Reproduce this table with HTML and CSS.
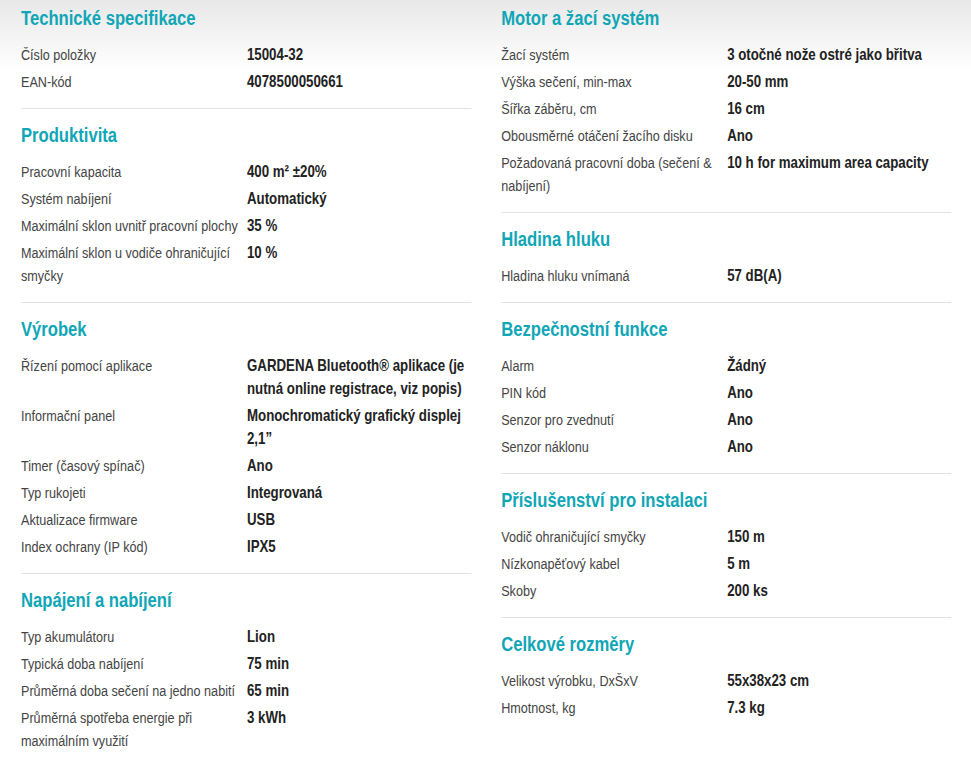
FILE: index.html
```html
<!DOCTYPE html>
<html lang="cs">
<head>
<meta charset="utf-8">
<link rel="stylesheet" href="styles.css">
</head>
<body>
<div class="page">
  <div class="col">
    <section class="sec">
      <h3>Technické specifikace</h3>
      <div class="row"><div class="k">Číslo položky</div><div class="v">15004-32</div></div>
      <div class="row"><div class="k">EAN-kód</div><div class="v">4078500050661</div></div>
    </section>
    <section class="sec">
      <h3>Produktivita</h3>
      <div class="row"><div class="k">Pracovní kapacita</div><div class="v">400 m² ±20%</div></div>
      <div class="row"><div class="k">Systém nabíjení</div><div class="v">Automatický</div></div>
      <div class="row"><div class="k">Maximální sklon uvnitř pracovní plochy</div><div class="v">35 %</div></div>
      <div class="row"><div class="k">Maximální sklon u vodiče ohraničující smyčky</div><div class="v">10 %</div></div>
    </section>
    <section class="sec">
      <h3>Výrobek</h3>
      <div class="row"><div class="k">Řízení pomocí aplikace</div><div class="v">GARDENA Bluetooth® aplikace (je nutná online registrace, viz popis)</div></div>
      <div class="row"><div class="k">Informační panel</div><div class="v">Monochromatický grafický displej 2,1”</div></div>
      <div class="row"><div class="k">Timer (časový spínač)</div><div class="v">Ano</div></div>
      <div class="row"><div class="k">Typ rukojeti</div><div class="v">Integrovaná</div></div>
      <div class="row"><div class="k">Aktualizace firmware</div><div class="v">USB</div></div>
      <div class="row"><div class="k">Index ochrany (IP kód)</div><div class="v">IPX5</div></div>
    </section>
    <section class="sec">
      <h3>Napájení a nabíjení</h3>
      <div class="row"><div class="k">Typ akumulátoru</div><div class="v">Lion</div></div>
      <div class="row"><div class="k">Typická doba nabíjení</div><div class="v">75 min</div></div>
      <div class="row"><div class="k">Průměrná doba sečení na jedno nabití</div><div class="v">65 min</div></div>
      <div class="row"><div class="k">Průměrná spotřeba energie při maximálním využití</div><div class="v">3 kWh</div></div>
    </section>
  </div>
  <div class="col">
    <section class="sec">
      <h3>Motor a žací systém</h3>
      <div class="row"><div class="k">Žací systém</div><div class="v">3 otočné nože ostré jako břitva</div></div>
      <div class="row"><div class="k">Výška sečení, min-max</div><div class="v">20-50 mm</div></div>
      <div class="row"><div class="k">Šířka záběru, cm</div><div class="v">16 cm</div></div>
      <div class="row"><div class="k">Obousměrné otáčení žacího disku</div><div class="v">Ano</div></div>
      <div class="row"><div class="k">Požadovaná pracovní doba (sečení &amp; nabíjení)</div><div class="v">10 h for maximum area capacity</div></div>
    </section>
    <section class="sec">
      <h3>Hladina hluku</h3>
      <div class="row"><div class="k">Hladina hluku vnímaná</div><div class="v">57 dB(A)</div></div>
    </section>
    <section class="sec">
      <h3>Bezpečnostní funkce</h3>
      <div class="row"><div class="k">Alarm</div><div class="v">Žádný</div></div>
      <div class="row"><div class="k">PIN kód</div><div class="v">Ano</div></div>
      <div class="row"><div class="k">Senzor pro zvednutí</div><div class="v">Ano</div></div>
      <div class="row"><div class="k">Senzor náklonu</div><div class="v">Ano</div></div>
    </section>
    <section class="sec">
      <h3>Příslušenství pro instalaci</h3>
      <div class="row"><div class="k">Vodič ohraničující smyčky</div><div class="v">150 m</div></div>
      <div class="row"><div class="k">Nízkonapěťový kabel</div><div class="v">5 m</div></div>
      <div class="row"><div class="k">Skoby</div><div class="v">200 ks</div></div>
    </section>
    <section class="sec">
      <h3>Celkové rozměry</h3>
      <div class="row"><div class="k">Velikost výrobku, DxŠxV</div><div class="v">55x38x23 cm</div></div>
      <div class="row"><div class="k">Hmotnost, kg</div><div class="v">7.3 kg</div></div>
    </section>
  </div>
</div>
</body>
</html>
```

FILE: styles.css
```css
html, body {
  margin: 0;
  padding: 0;
}
body {
  background: linear-gradient(#e8e8e8 0px, #ffffff 70px) no-repeat;
  background-color: #fff;
  font-family: "Liberation Sans", Arial, sans-serif;
  color: #444;
  min-height: 774px;
  overflow: hidden;
}
/* Condensed look: Arial-metric font narrowed horizontally (Arial Narrow ≈ 82%) */
.page {
  width: 1170px;
  transform: scaleX(0.82);
  transform-origin: 0 0;
  display: grid;
  grid-template-columns: 549px 549px;
  column-gap: 36.6px;
  padding: 0 0 0 25.6px;
  align-items: start;
  box-sizing: border-box;
}
.sec {
  padding: 14px 0 15px;
  border-bottom: 1px solid #e2e2e2;
}
.sec:first-child {
  padding-top: 6px;
}
.sec:last-child {
  border-bottom: none;
}
h3 {
  margin: 0 0 13px;
  font-size: 20.3px;
  line-height: 24px;
  font-weight: bold;
  color: #10a6b6;
}
.row {
  display: grid;
  grid-template-columns: 275.6px 1fr;
  font-size: 15.4px;
  line-height: 23px;
  margin-bottom: 4px;
}
.row:last-child {
  margin-bottom: 0;
}
.k {
  color: #444;
  padding-right: 6px;
}
.v {
  font-weight: bold;
  font-size: 16.2px;
  color: #222;
}
```
